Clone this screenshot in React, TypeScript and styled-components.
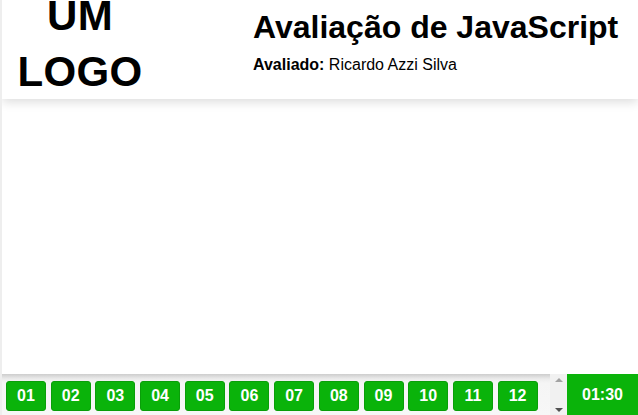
import React from "react";
import styled, { createGlobalStyle } from "styled-components";

const GlobalStyle = createGlobalStyle`
  html, body { margin: 0; padding: 0; background: #ffffff; }
  body { font-family: "Liberation Sans", Arial, sans-serif; color: #000; }
  * { box-sizing: border-box; }
`;

const GREEN = "#0ab30a";

const Page = styled.div`
  display: flex;
  flex-direction: column;
  height: 100vh;
  border-left: 2px solid #eeeeee;
  background: #ffffff;
  overflow: hidden;
`;

const Header = styled.header`
  height: 99px;
  flex: none;
  display: flex;
  align-items: flex-start;
  background: #ffffff;
  box-shadow: 0 3px 10px rgba(0, 0, 0, 0.14);
  position: relative;
  z-index: 1;
  overflow: hidden;
`;

const Logo = styled.div`
  width: 156px;
  flex: none;
  margin-top: -12px;
  text-align: center;
  font-weight: 700;
  font-size: 42px;
  line-height: 56px;
  letter-spacing: 0.3px;
`;

const TitleBlock = styled.div`
  margin-left: 95px;
  display: flex;
  flex-direction: column;
`;

const Title = styled.h1`
  margin: 9px 0 0;
  font-size: 32px;
  line-height: 37px;
  font-weight: 700;
  white-space: nowrap;
`;

const Subtitle = styled.p`
  margin: 10px 0 0;
  font-size: 16px;
  line-height: 18px;
  white-space: nowrap;
`;

const Main = styled.main`
  flex: 1;
  background: #ffffff;
`;

const BottomBar = styled.footer`
  height: 41px;
  flex: none;
  display: flex;
  background: linear-gradient(to bottom, #cdcdcd 0, #ececec 5px, #f5f5f5 9px, #f7f7f7 100%);
`;

const Strip = styled.nav`
  flex: 1;
  display: flex;
  align-items: flex-start;
  gap: 4.7px;
  padding: 7px 0 0 4px;
`;

const QButton = styled.button`
  width: 40px;
  height: 30px;
  padding: 0;
  border: 1px solid #099e09;
  border-radius: 3px;
  background: ${GREEN};
  color: #ffffff;
  font-family: "Liberation Sans", Arial, sans-serif;
  font-weight: 700;
  font-size: 16px;
  line-height: 28px;
  text-align: center;
  cursor: pointer;
`;

const ScrollTrack = styled.div`
  width: 17px;
  flex: none;
  background: #f1f1f1;
  display: flex;
  flex-direction: column;
  justify-content: space-between;
  align-items: center;
  padding: 4px 0 3px;
`;

const Arrow = styled.span<{ $dir: "up" | "down" }>`
  width: 0;
  height: 0;
  border-left: 4px solid transparent;
  border-right: 4px solid transparent;
  ${(p) =>
    p.$dir === "up"
      ? "border-bottom: 4px solid #a3a3a3;"
      : "border-top: 4px solid #505050;"}
`;

const Timer = styled.div`
  width: 71px;
  flex: none;
  background: ${GREEN};
  color: #ffffff;
  font-weight: 700;
  font-size: 16px;
  display: flex;
  align-items: center;
  justify-content: center;
`;

const questions = ["01", "02", "03", "04", "05", "06", "07", "08", "09", "10", "11", "12"];

export default function App() {
  return (
    <>
      <GlobalStyle />
      <Page>
        <Header>
          <Logo>
            UM
            <br />
            LOGO
          </Logo>
          <TitleBlock>
            <Title>Avaliação de JavaScript</Title>
            <Subtitle>
              <b>Avaliado:</b> Ricardo Azzi Silva
            </Subtitle>
          </TitleBlock>
        </Header>
        <Main />
        <BottomBar>
          <Strip>
            {questions.map((q) => (
              <QButton key={q}>{q}</QButton>
            ))}
          </Strip>
          <ScrollTrack>
            <Arrow $dir="up" />
            <Arrow $dir="down" />
          </ScrollTrack>
          <Timer>01:30</Timer>
        </BottomBar>
      </Page>
    </>
  );
}
